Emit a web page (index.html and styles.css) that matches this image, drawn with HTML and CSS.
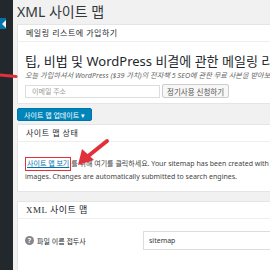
FILE: index.html
```html
<!DOCTYPE html>
<html lang="ko">
<head>
    <meta charset="UTF-8">
    <meta name="viewport" content="width=device-width, initial-scale=1.0">
    <title>XML 사이트 맵</title>
    <link rel="stylesheet" href="styles.css">
</head>
<body>

    <div class="admin">
        <nav class="sidebar">
            <span class="current"></span>
        </nav>

        <main class="wrap">
            <h1>XML 사이트 맵</h1>

            <section class="postbox">
                <h2 class="hndle">메일링 리스트에 가입하기</h2>
                <div class="inside">
                    <p class="lead">팁, 비법 및 WordPress 비결에 관한 메일링 리스트</p>
                    <p class="note">오늘 가입하셔서 WordPress ($39 가치)의 전자책 5 SEO에 관한 무료 사본을 받아보세요.</p>
                    <form class="signup">
                        <input type="email" placeholder="이메일 주소">
                        <button type="button" class="button">정기사용 신청하기</button>
                    </form>
                </div>
            </section>

            <div class="actions">
                <button type="button" class="button-primary">사이트 맵 업데이트 ▾</button>
            </div>

            <section class="postbox">
                <h2 class="hndle">사이트 맵 상태</h2>
                <div class="inside status-box">
                    <p class="status">
                        <span class="callout"><a href="#">사이트 맵 보기</a></span>를 위해 여기를 클릭하세요. Your sitemap has been created with<br>
                        images. Changes are automatically submitted to search engines.
                    </p>
                </div>
            </section>

            <section class="postbox">
                <h2 class="hndle serif">XML 사이트 맵</h2>
                <div class="inside">
                    <div class="field">
                        <label><span class="help">?</span>파일 이름 접두사</label>
                        <input type="text" value="sitemap">
                    </div>
                </div>
            </section>
        </main>
    </div>

    <!-- annotation arrows drawn over the screenshot -->
    <svg class="marks" width="270" height="270" viewBox="0 0 270 270">
        <path d="M0 75 L16 76.5" stroke="#e0303a" stroke-width="3" stroke-linecap="round"/>
        <path d="M107 141 L87 157" stroke="#e0303a" stroke-width="4" stroke-linecap="round"/>
        <path d="M78 165 L82 149 L94 160 Z" fill="#e0303a"/>
    </svg>

</body>
</html>
```

FILE: styles.css
```css
/* Sitemap settings page */
* {
    box-sizing: border-box;
}

html, body {
    margin: 0;
    padding: 0;
    height: 100%;
    overflow: hidden;
}

body {
    background: #f1f1f1;
    font-family: "Noto Sans", "Noto Sans CJK KR", sans-serif;
    font-size: 8px;
    color: #444;
}

.admin {
    display: flex;
    min-height: 270px;
}

.sidebar {
    flex: none;
    width: 13px;
    background: #23282d;
    position: relative;
}

.sidebar .current {
    position: absolute;
    top: 18px;
    left: 0;
    width: 6px;
    height: 11px;
    background: #0073aa;
}

.sidebar .current::after {
    content: "";
    position: absolute;
    top: 1.5px;
    right: 0;
    border-top: 4px solid transparent;
    border-bottom: 4px solid transparent;
    border-right: 4px solid #f1f1f1;
}

.wrap {
    flex: none;
    width: 420px;
    padding: 4px 0 0 4px;
}

h1 {
    margin: 0 0 4px;
    font-size: 14px;
    font-weight: 400;
    line-height: 16px;
    color: #32373c;
}

.postbox {
    background: #fff;
    border: 1px solid #e5e5e5;
    margin-bottom: 9px;
}

.hndle {
    margin: 0;
    padding: 3px 8px;
    font-size: 8px;
    font-weight: 400;
    line-height: 10px;
    color: #23282d;
    border-bottom: 1px solid #eee;
    letter-spacing: 0.5px;
}

.hndle.serif {
    font-family: "Liberation Serif", "Noto Sans CJK KR", serif;
    font-size: 9px;
}

.inside {
    padding: 8px 7px 5px;
}

.lead {
    margin: 2px 0 0;
    font-size: 13px;
    line-height: 18px;
    color: #23282d;
    white-space: nowrap;
}

.note {
    margin: 0;
    font-size: 7.2px;
    line-height: 10px;
    font-style: italic;
    color: #666;
    white-space: nowrap;
}

.signup {
    display: flex;
    gap: 2px;
    align-items: center;
    margin-top: 4px;
}

.signup input {
    flex: none;
    width: 135px;
    height: 13px;
    padding: 0 6px;
    border: 1px solid #ddd;
    font: inherit;
    font-size: 7px;
}

.signup input::placeholder {
    color: #999;
}

.button {
    flex: none;
    height: 14px;
    padding: 0 4px;
    border: 1px solid #ccc;
    border-radius: 2px;
    background: #f7f7f7;
    font: inherit;
    font-size: 7.5px;
    color: #555;
}

.actions {
    margin: -5px 0 3px;
}

.button-primary {
    height: 13px;
    padding: 0 6px;
    border: 1px solid #0073aa;
    border-radius: 2px;
    background: #0085ba;
    color: #fff;
    font: inherit;
    font-size: 7px;
}

.status-box {
    padding-bottom: 8px;
}

.status {
    margin: 7px 0 0;
    font-size: 7px;
    line-height: 12px;
    white-space: nowrap;
}

.status a {
    color: #0073aa;
}

.callout {
    display: inline-block;
    padding: 1px 1px;
    border: 1.5px solid #e0303a;
    line-height: 10px;
}

.field {
    display: flex;
    align-items: center;
    padding: 4px 0 20px;
}

.field label {
    width: 118px;
    display: flex;
    align-items: center;
    gap: 3px;
    font-size: 7px;
    color: #23282d;
}

.help {
    width: 9px;
    height: 9px;
    border-radius: 50%;
    background: #82878c;
    color: #fff;
    font-size: 7px;
    font-weight: 700;
    line-height: 9px;
    text-align: center;
}

.field input {
    width: 160px;
    height: 19px;
    padding: 0 5px;
    border: 1px solid #ddd;
    font: inherit;
    font-size: 7px;
    color: #32373c;
}

.marks {
    position: absolute;
    top: 0;
    left: 0;
    pointer-events: none;
}
```
